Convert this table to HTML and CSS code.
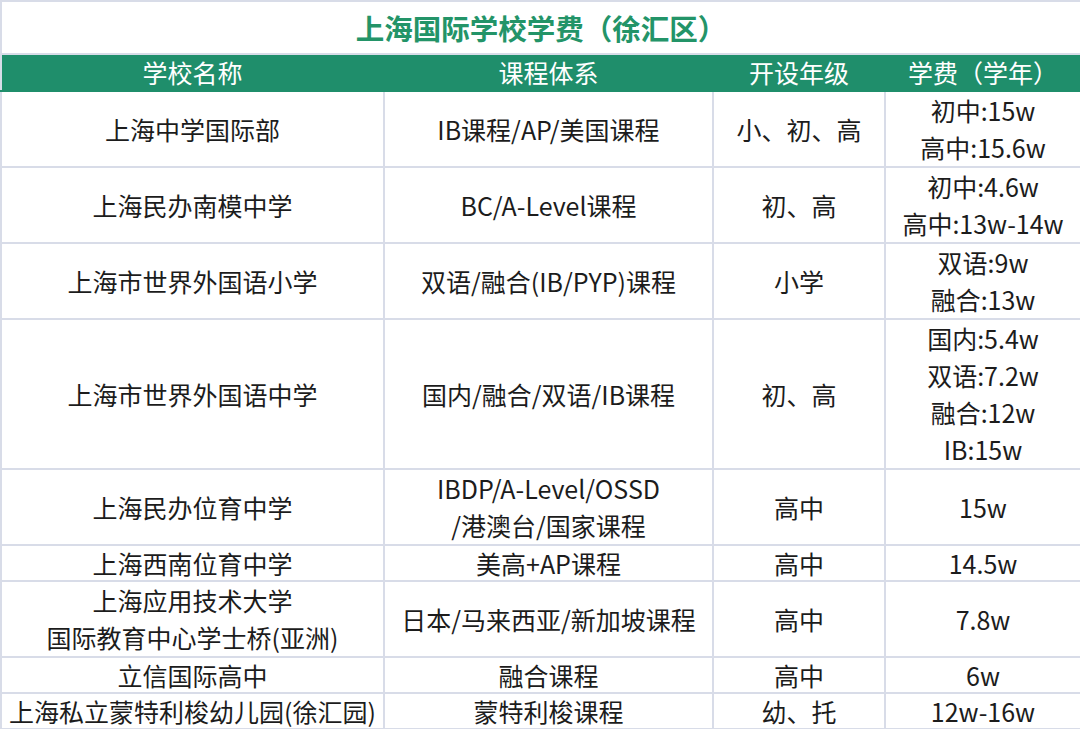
FILE: index.html
```html
<!DOCTYPE html>
<html lang="zh">
<head>
<meta charset="utf-8">
<link rel="stylesheet" href="styles.css">
</head>
<body>
<table class="fees">
  <colgroup>
    <col class="c1"><col class="c2"><col class="c3"><col class="c4">
  </colgroup>
  <tr class="title-row"><td colspan="4" class="title">上海国际学校学费（徐汇区）</td></tr>
  <tr class="head">
    <th>学校名称</th><th>课程体系</th><th>开设年级</th><th>学费（学年）</th>
  </tr>
  <tr class="r2">
    <td>上海中学国际部</td><td>IB课程/AP/美国课程</td><td>小、初、高</td><td>初中:15w<br>高中:15.6w</td>
  </tr>
  <tr class="r2">
    <td>上海民办南模中学</td><td>BC/A-Level课程</td><td>初、高</td><td>初中:4.6w<br>高中:13w-14w</td>
  </tr>
  <tr class="r2">
    <td>上海市世界外国语小学</td><td>双语/融合(IB/PYP)课程</td><td>小学</td><td>双语:9w<br>融合:13w</td>
  </tr>
  <tr class="r4">
    <td>上海市世界外国语中学</td><td>国内/融合/双语/IB课程</td><td>初、高</td><td>国内:5.4w<br>双语:7.2w<br>融合:12w<br>IB:15w</td>
  </tr>
  <tr class="r2">
    <td>上海民办位育中学</td><td>IBDP/A-Level/OSSD<br>/港澳台/国家课程</td><td>高中</td><td>15w</td>
  </tr>
  <tr class="r1">
    <td>上海西南位育中学</td><td>美高+AP课程</td><td>高中</td><td>14.5w</td>
  </tr>
  <tr class="r2">
    <td>上海应用技术大学<br>国际教育中心学士桥(亚洲)</td><td>日本/马来西亚/新加坡课程</td><td>高中</td><td>7.8w</td>
  </tr>
  <tr class="r1">
    <td>立信国际高中</td><td>融合课程</td><td>高中</td><td>6w</td>
  </tr>
  <tr class="r1">
    <td>上海私立蒙特利梭幼儿园(徐汇园)</td><td>蒙特利梭课程</td><td>幼、托</td><td>12w-16w</td>
  </tr>
</table>
</body>
</html>
```

FILE: styles.css
```css
html, body {
  margin: 0;
  padding: 0;
  background: #ffffff;
}

.fees {
  width: 1080px;
  border-collapse: collapse;
  table-layout: fixed;
  font-family: "Noto Sans CJK SC", "Noto Sans", sans-serif;
  color: #1c1c1c;
  border: 2px solid #d8dce8;
}

.c1 { width: 383px; }
.c2 { width: 329px; }
.c3 { width: 172px; }
.c4 { width: 196px; }

.fees td, .fees th {
  border: 2px solid #d8dce8;
  padding: 0;
  text-align: center;
  vertical-align: middle;
  font-size: 25px;
  font-weight: 400;
  white-space: nowrap;
}

.title-row .title {
  height: 51px;
  color: #239468;
  font-size: 28.5px;
  font-weight: 700;
  line-height: 51px;
}

.head th {
  background: #1f8e6b;
  color: #ffffff;
  height: 35px;
  line-height: 35px;
  border-color: #1f8e6b;
}

.head th:first-child { border-left-color: #d8dce8; }
.head th:last-child { border-right-color: #d8dce8; }

.r2 td {
  height: 73px;
  line-height: 37px;
}

.r4 td {
  height: 147px;
  line-height: 37px;
}

.r1 td {
  height: 34px;
  line-height: 34px;
}
```
